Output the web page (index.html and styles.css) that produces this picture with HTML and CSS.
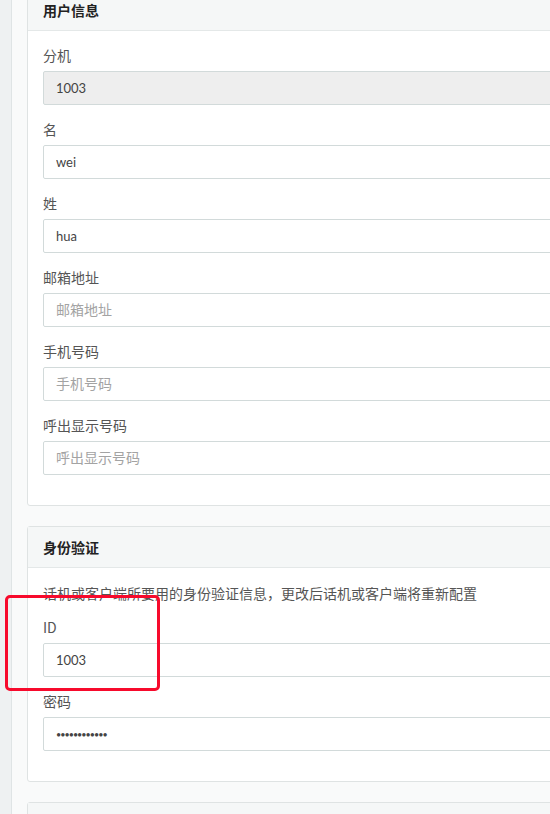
FILE: index.html
```html
<!DOCTYPE html>
<html lang="zh">
<head>
<meta charset="utf-8">
<link rel="stylesheet" href="styles.css">
</head>
<body>
<div class="layout">
  <aside class="sidebar"></aside>
  <main class="content">
    <section class="card card-first">
      <div class="card-header">用户信息</div>
      <div class="card-body">
        <div class="form-group">
          <label class="label">分机</label>
          <input class="input" type="text" value="1003" disabled>
        </div>
        <div class="form-group">
          <label class="label">名</label>
          <input class="input" type="text" value="wei">
        </div>
        <div class="form-group">
          <label class="label">姓</label>
          <input class="input" type="text" value="hua">
        </div>
        <div class="form-group">
          <label class="label">邮箱地址</label>
          <input class="input" type="text" placeholder="邮箱地址">
        </div>
        <div class="form-group">
          <label class="label">手机号码</label>
          <input class="input" type="text" placeholder="手机号码">
        </div>
        <div class="form-group">
          <label class="label">呼出显示号码</label>
          <input class="input" type="text" placeholder="呼出显示号码">
        </div>
      </div>
    </section>
    <section class="card">
      <div class="card-header">身份验证</div>
      <div class="card-body">
        <p class="desc">话机或客户端所要用的身份验证信息，更改后话机或客户端将重新配置</p>
        <div class="form-group">
          <label class="label">ID</label>
          <input class="input" type="text" value="1003">
        </div>
        <div class="form-group">
          <label class="label">密码</label>
          <input class="input input-pass" type="password" value="abcdefghijkl">
        </div>
      </div>
    </section>
    <section class="card card-last">
      <div class="card-header">&nbsp;</div>
    </section>
  </main>
</div>
<div class="highlight"></div>
</body>
</html>
```
FILE: styles.css
```css
html, body {
  margin: 0;
  padding: 0;
  overflow: hidden;
  width: 550px;
  height: 814px;
  background: #f9fafa;
  font-family: Lato, "Noto Sans CJK SC", sans-serif;
  color: #555;
}
.layout {
  display: flex;
  height: 814px;
  overflow: hidden;
}
.sidebar {
  width: 11px;
  flex: 0 0 11px;
  background: #eef1f2;
  border-right: 1px solid #dfe4e5;
}
.content {
  flex: 1;
  padding-left: 15px;
  margin-top: -11px;
  min-width: 0;
  overflow: hidden;
}
.card {
  background: #fff;
  border: 1px solid #dfe3e3;
  border-radius: 3px;
  margin-right: -40px;
  margin-bottom: 20px;
}
.card-header {
  background: #f5f7f7;
  border-bottom: 1px solid #e4e8e8;
  padding: 10px 15px;
  height: 20px;
  line-height: 20px;
  font-size: 14px;
  font-weight: 700;
  color: #222;
  font-family: "Noto Sans CJK SC", sans-serif;
}
.card-body {
  padding: 15px;
}
.form-group {
  margin-bottom: 15px;
}
.label {
  display: block;
  font-family: "Noto Sans CJK SC", sans-serif;
  font-size: 14px;
  line-height: 19px;
  height: 19px;
  margin-bottom: 6px;
  color: #555;
}
.input {
  display: block;
  box-sizing: border-box;
  width: 100%;
  height: 34px;
  padding: 0 12px;
  border: 1px solid #d2dada;
  border-radius: 2px;
  background: #fff;
  font-family: Lato, "Noto Sans CJK SC", sans-serif;
  font-size: 13px;
  color: #444;
  outline: none;
}
.input::placeholder {
  color: #a3a3a3;
  font-family: "Noto Sans CJK SC", sans-serif;
  font-size: 14px;
}
.input:disabled {
  background: #eeeeee;
  color: #444;
}
.input-pass {
  font-size: 9px;
  letter-spacing: -1px;
}
.desc {
  margin: 0 0 15px;
  font-family: "Noto Sans CJK SC", sans-serif;
  font-size: 14px;
  line-height: 20px;
  color: #555;
}
.highlight {
  position: absolute;
  left: 5px;
  top: 595px;
  width: 149px;
  height: 90px;
  border: 3px solid #f70a2c;
  border-radius: 5px;
}
```
